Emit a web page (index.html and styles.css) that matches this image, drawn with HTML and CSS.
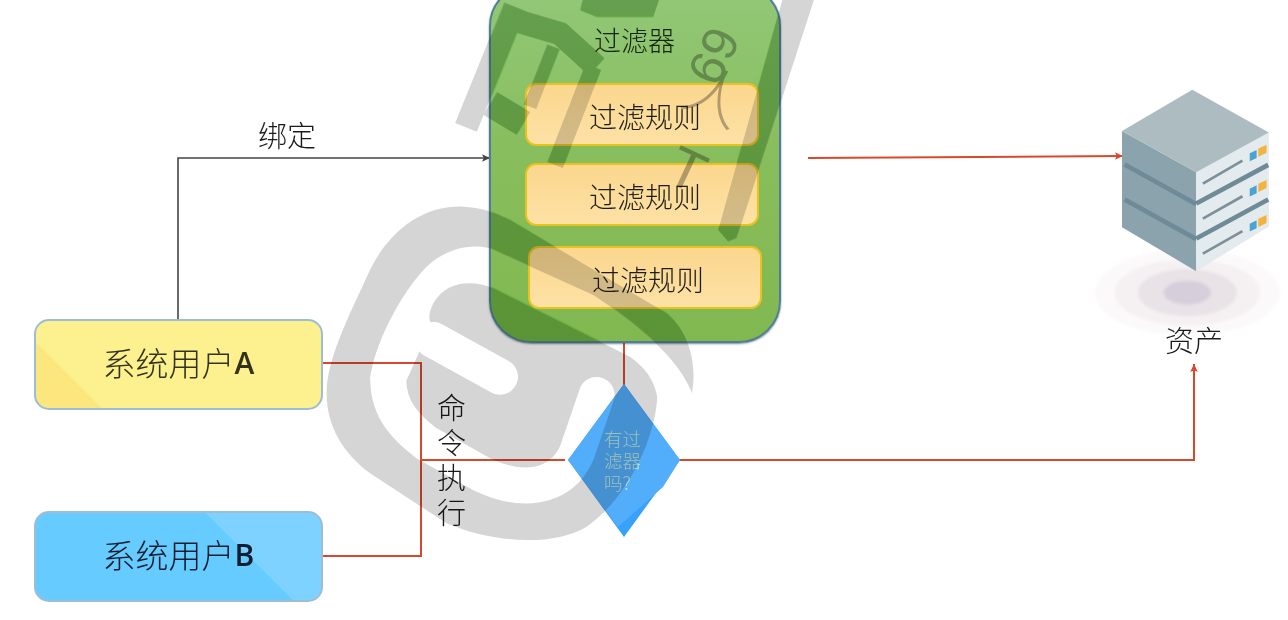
FILE: index.html
```html
<!DOCTYPE html>
<html lang="zh-CN">
<head>
<meta charset="utf-8">
<title>过滤器</title>
<link rel="stylesheet" href="styles.css">
</head>
<body>
<main class="canvas">
  <svg class="layer" viewBox="0 0 1288 620" aria-hidden="true">
    <defs>
      <marker id="arrow-dark" markerWidth="10" markerHeight="10" refX="9" refY="5" orient="auto" markerUnits="userSpaceOnUse">
        <path d="M1 1.2 L9 5 L1 8.8 L2.8 5 Z" class="head-dark"/>
      </marker>
      <marker id="arrow-red" markerWidth="10" markerHeight="10" refX="9" refY="5" orient="auto" markerUnits="userSpaceOnUse">
        <path d="M1 1.2 L9 5 L1 8.8 L2.8 5 Z" class="head-red"/>
      </marker>
    </defs>
    <path class="wire-dark" d="M178 319 V158 H490" marker-end="url(#arrow-dark)"/>
    <path class="wire-red" d="M808 158 L1123 156" marker-end="url(#arrow-red)"/>
    <path class="wire-red" d="M322 363 H421 V556 H322"/>
    <path class="wire-red" d="M421 460 H565"/>
    <path class="wire-red" d="M624 342 V385"/>
    <path class="wire-red" d="M679 460 H1194 V364" marker-end="url(#arrow-red)"/>
  </svg>

  <div class="user user-a">系统用户<span class="latin">A</span></div>
  <div class="user user-b">系统用户<span class="latin">B</span></div>

  <div class="filter">
    <svg class="filter-tint" viewBox="490 -15 290 357" aria-hidden="true">
      <use href="#wm-art"/>
    </svg>
    <div class="filter-title">过滤器</div>
    <div class="rule rule-1">过滤规则</div>
    <div class="rule rule-2">过滤规则</div>
    <div class="rule rule-3">过滤规则</div>
  </div>

  <svg class="diamond" viewBox="0 0 112 154" aria-hidden="true">
    <polygon class="diamond-edge" points="0,76 56,0 112,76 56,153"/>
    <polygon class="diamond-face" points="0,76 56,0 112,76 95,103 50,143"/>
  </svg>
  <div class="diamond-text">有过<br>滤器<br>吗?</div>

  <svg class="server" viewBox="0 0 600 900" aria-hidden="true">
    <g class="ripple">
      <ellipse class="r1" cx="295" cy="670" rx="280" ry="130"/>
      <ellipse class="r2" cx="295" cy="670" rx="220" ry="100"/>
      <ellipse class="r3" cx="295" cy="670" rx="150" ry="72"/>
      <ellipse class="r4" cx="295" cy="670" rx="72" ry="36"/>
    </g>
    <polygon class="s-left" points="97,180 322,305 322,605 97,472"/>
    <polygon class="s-right" points="322,305 542,185 542,470 322,605"/>
    <polygon class="s-top" points="310,55 542,185 322,305 97,180"/>
    <path class="s-gap-l" d="M105 282 L322 402 M105 388 L322 508"/>
    <path class="s-gap-r" d="M322 400 L540 283 M322 506 L540 388"/>
    <path class="s-slot" d="M342 340 L462 270 M342 446 L462 378 M342 552 L462 484"/>
    <polygon class="s-blue" points="484,248 505,238 505,262 484,272"/>
    <polygon class="s-gold" points="510,233 535,222 535,246 510,258"/>
    <polygon class="s-blue" points="484,355 505,345 505,369 484,379"/>
    <polygon class="s-gold" points="510,340 535,329 535,353 510,365"/>
    <polygon class="s-blue" points="484,461 505,451 505,475 484,485"/>
    <polygon class="s-gold" points="510,446 535,435 535,459 510,471"/>
  </svg>

  <div class="label bind">绑定</div>
  <div class="label exec">命<br>令<br>执<br>行</div>
  <div class="label asset">资产</div>

  <svg class="watermark" viewBox="0 0 1288 620" aria-hidden="true">
    <defs>
      <mask id="s-cut" maskUnits="userSpaceOnUse" x="320" y="180" width="420" height="420">
        <rect x="320" y="180" width="420" height="420" fill="#fff"/>
        <g transform="translate(320 180) scale(.3333)">
          <path fill="#000" d="M150 600 C160 500 240 340 320 260 C380 205 450 190 510 205 L820 345 C950 430 1085 540 1120 650 L1012 650 C1000 590 970 560 930 530 L520 325 C460 300 380 300 340 370 C325 400 325 420 335 432 L260 600 Z"/>
          <path class="s-cut-line" d="M340 480 L540 590"/>
          <path class="s-cut-line" d="M205 600 C205 690 260 745 320 790 L480 880 C600 940 720 930 770 820 L830 645"/>
        </g>
      </mask>
    </defs>
    <g id="wm-art">
      <g mask="url(#s-cut)">
        <path class="wm" transform="translate(320 180) scale(.3333)" d="M20 640 C20 560 60 470 90 400 L150 270 C210 150 310 75 430 80 C480 82 520 95 570 120 L1040 400 C1100 450 1135 540 1115 645 L1012 645 C1010 760 930 950 800 1040 C700 1100 520 1090 380 1030 L150 880 C70 820 20 740 20 640 Z"/>
      </g>
      <g transform="translate(440 0) scale(.3333)">
        <g class="wm-bars">
          <path class="bar-70" d="M78 382 L225 20"/>
          <path class="bar-70" d="M190 50 L360 100 L470 200"/>
          <path class="bar-40" d="M340 140 L270 320"/>
          <path class="bar-50" d="M460 200 L345 495"/>
          <path class="bar-80" d="M150 310 L250 370"/>
        </g>
        <polygon class="wm" points="420,30 470,50 640,50 660,-10 430,-10"/>
        <polygon class="wm" points="1030,-10 1125,-10 890,715 865,725 835,690"/>
      </g>
    </g>
    <g transform="translate(440 0) scale(.3333)">
      <text class="wm-text wm-69" transform="translate(810 70) rotate(115)">69</text>
      <text class="wm-text wm-ren" transform="translate(715 310) rotate(25)">人</text>
      <text class="wm-text wm-t" transform="translate(670 540) rotate(25)">T</text>
    </g>
  </svg>
</main>
</body>
</html>
```

FILE: styles.css
```css
html, body {
  margin: 0;
  padding: 0;
  background: #fff;
}

.canvas {
  position: relative;
  width: 1288px;
  height: 620px;
  overflow: hidden;
  background: #fff;
  filter: blur(0.5px);
  font-family: "Noto Sans CJK SC", "Liberation Sans", sans-serif;
  font-weight: 300;
  color: #2a2a2a;
}

.layer {
  position: absolute;
  inset: 0;
  width: 1288px;
  height: 620px;
}

.wire-dark, .wire-red {
  fill: none;
}
.wire-dark {
  stroke: #444;
  stroke-width: 1.6;
}
.wire-red {
  stroke: #d9482b;
  stroke-width: 2;
}
.head-dark { fill: #444; }
.head-red { fill: #d9482b; }

.user {
  position: absolute;
  left: 34px;
  box-sizing: border-box;
  width: 289px;
  height: 91px;
  border: 2px solid #9dbdd6;
  border-radius: 15px;
  padding-bottom: 4px;
  display: flex;
  align-items: center;
  justify-content: center;
  font-size: 33px;
  line-height: 1;
}
.latin {
  font-family: "Open Sans", "Liberation Sans", sans-serif;
  font-weight: 600;
  font-size: 30px;
}
.user-a {
  top: 319px;
  background: linear-gradient(45deg, #fbe77e 46px, #fdf08f 47px);
  color: #33331c;
}
.user-b {
  top: 511px;
  background: linear-gradient(45deg, #66ccff 181px, #7dd2ff 182px);
  color: #101c30;
}

.filter {
  position: absolute;
  left: 489px;
  top: -16px;
  box-sizing: border-box;
  width: 292px;
  height: 359px;
  border: 2px solid #4f7f96;
  border-radius: 42px;
  background: linear-gradient(180deg, #92c878 0%, #88bd5c 50%, #82b850 100%);
  box-shadow: 0 1px 2px rgba(40, 60, 60, 0.6);
}
.filter-tint {
  --wm: #d4f5cc;
  position: absolute;
  inset: 0;
  width: 100%;
  height: 100%;
  clip-path: inset(0 round 40px);
  mix-blend-mode: multiply;
}
.filter-title {
  position: absolute;
  left: 103px;
  top: 36px;
  font-size: 27px;
  line-height: 36px;
  color: #14240f;
}
.rule {
  position: absolute;
  box-sizing: border-box;
  width: 234px;
  height: 63px;
  border: 2px solid #e9c21c;
  border-radius: 11px;
  background: linear-gradient(180deg, #fbd78e, #fde1a5);
  display: flex;
  align-items: center;
  justify-content: center;
  padding: 2px 0 0 6px;
  font-size: 28px;
  line-height: 1;
  color: #1d1c16;
}
.rule-1 { left: 34px; top: 97px; }
.rule-2 { left: 34px; top: 177px; }
.rule-3 { left: 37px; top: 260px; }

.label {
  position: absolute;
  line-height: 1;
  color: #1a1a1a;
}
.bind {
  left: 258px;
  top: 120px;
  font-size: 29px;
}
.exec {
  left: 437px;
  top: 389px;
  font-size: 29px;
  line-height: 35px;
}
.asset {
  left: 1165px;
  top: 325px;
  font-size: 29px;
}

.diamond {
  position: absolute;
  left: 568px;
  top: 384px;
  width: 112px;
  height: 154px;
}
.diamond-edge { fill: #36a2fb; }
.diamond-face { fill: #52adfb; }
.diamond-text {
  position: absolute;
  left: 604px;
  top: 427px;
  font-size: 18.5px;
  line-height: 22px;
  color: #bce6de;
}

.server {
  position: absolute;
  left: 1090px;
  top: 70px;
  width: 198px;
  height: 300px;
}
.ripple { filter: blur(5px); }
.r1 { fill: #fbf9fa; }
.r2 { fill: #f5f0f2; }
.r3 { fill: #e9e3e7; }
.r4 { fill: #d6cfdb; }
.s-left { fill: #8aa3ad; }
.s-right { fill: #e4ebee; }
.s-top { fill: #adbcc0; }
.s-gap-l, .s-gap-r {
  fill: none;
  stroke: #6f8b98;
  stroke-width: 14;
}
.s-slot {
  fill: none;
  stroke: #7d8f98;
  stroke-width: 8;
}
.s-blue { fill: #4da3cf; }
.s-gold { fill: #f3b43f; }

.watermark {
  position: absolute;
  inset: 0;
  width: 1288px;
  height: 620px;
  mix-blend-mode: multiply;
  pointer-events: none;
}
.wm { fill: var(--wm, #d5d5d5); }
.wm-bars { fill: none; stroke: var(--wm, #d5d5d5); }
.bar-70 { stroke-width: 70; }
.bar-40 { stroke-width: 40; }
.bar-50 { stroke-width: 50; }
.bar-80 { stroke-width: 80; }
.s-cut-line {
  fill: none;
  stroke: #000;
  stroke-width: 108;
  stroke-linecap: round;
}
.wm-text {
  fill: #b4b4b4;
  font-family: "Liberation Sans", sans-serif;
}
.wm-69 { font-size: 150px; }
.wm-ren { font-size: 180px; font-family: "Noto Sans CJK SC", sans-serif; font-weight: 300; }
.wm-t { font-size: 170px; }
```
